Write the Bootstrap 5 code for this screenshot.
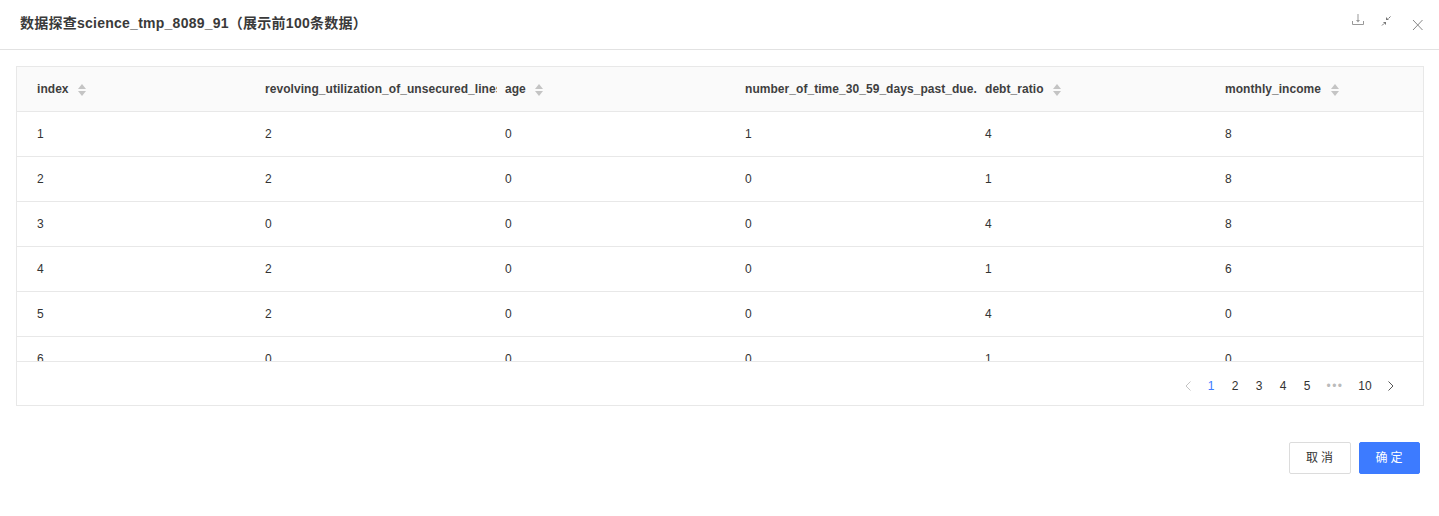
<!DOCTYPE html>
<html lang="en">
<head>
  <meta charset="UTF-8">
  <meta name="viewport" content="width=device-width, initial-scale=1.0">
  <title>数据探查</title>
  <link href="https://cdn.jsdelivr.net/npm/bootstrap@5.3.3/dist/css/bootstrap.min.css" rel="stylesheet">
  <style>
    body {
      font-family: "Liberation Sans", "Noto Sans CJK SC", sans-serif;
      font-size: 12px;
      color: #333;
      background: #fff;
      overflow: hidden;
    }

    .dialog-head {
      height: 50px;
      padding: 0 14px 0 20px;
      border-bottom: 1px solid #e2e2e2;
    }

    .dialog-title {
      font-size: 14px;
      font-weight: 700;
      letter-spacing: .25px;
      color: #3a3a3a;
      margin: 0;
      padding-bottom: 3px;
    }

    .tool-download { margin-top: 13px; }
    .tool-shrink { margin: 14px 18px 0 14px; }
    .tool-close { margin-top: 18px; }

    .data-box {
      margin: 16px 15px 0 16px;
      border: 1px solid #e8e8e8;
    }

    .data-scroll {
      height: 295px;
      overflow: hidden;
      border-bottom: 1px solid #e8e8e8;
    }

    .data-table {
      table-layout: fixed;
      width: 100%;
      margin: 0;
      font-size: 12px;
      color: #333;
    }

    .data-table th, .data-table td {
      height: 45px;
      padding: 0 0 0 8px;
      vertical-align: middle;
      white-space: nowrap;
      overflow: hidden;
      border-bottom: 1px solid #e8e8e8;
      color: #333;
    }

    .data-table th {
      background: #fafafa;
      font-weight: 700;
      letter-spacing: .05px;
      color: #3f3f3f;
      height: 44px;
    }

    .data-table th:first-child, .data-table td:first-child {
      padding-left: 20px;
    }

    .sort-mark {
      display: inline-block;
      vertical-align: middle;
      margin-left: 8.5px;
    }

    .pager-bar {
      height: 43px;
      padding: 4px 24px 0 0;
    }

    .pager-prev {
      margin-right: 1px;
    }

    .pager-next {
      margin-left: 2px;
    }

    .pager-item {
      width: 24px;
      text-align: center;
      color: #333;
    }

    .pager-item.is-current {
      color: #3d7bff;
    }

    .pager-dots {
      width: 28px;
      margin-left: 2px;
      text-align: center;
      color: #bbb;
      font-size: 12px;
      letter-spacing: 1.5px;
      white-space: nowrap;
    }

    .pager-wide {
      width: 32px;
    }

    .dialog-foot {
      padding: 36px 19px 0 0;
    }

    .btn-plain, .btn-ok {
      width: 62px;
      height: 32px;
      font-size: 12px;
      letter-spacing: 3px;
      border-radius: 2px;
      padding: 0 0 0 2px;
    }

    .btn-plain {
      background: #fff;
      border: 1px solid #dcdcdc;
      color: #333;
    }

    .btn-ok {
      width: 61px;
      background: #3d7bff;
      border: 1px solid #3d7bff;
      color: #fff;
    }
  </style>
</head>
<body>
  <div class="dialog-head d-flex justify-content-between">
    <h1 class="dialog-title align-self-center">数据探查science_tmp_8089_91（展示前100条数据）</h1>
    <div class="d-flex align-items-start">
      <svg class="tool-download" width="14" height="14" viewBox="0 0 14 14" fill="none" stroke="#999"><path d="M7 1v6.500M1.500 8v3.500h11V8"/><path d="M5 7h4L7 9.500z" fill="#999" stroke="none"/></svg>
      <svg class="tool-shrink" width="14" height="14" viewBox="0 0 14 14" fill="none" stroke="#777"><path d="M3 11.500 5 9.500M11.500 2.500 9.500 4.500"/><path d="M4 8h3v3zM10 6H7V3z" fill="#777" stroke="none"/></svg>
      <svg class="tool-close" width="14" height="14" viewBox="0 0 14 14" fill="none" stroke="#888"><path d="M2 2 11.500 12M11.500 2 2 12"/></svg>
    </div>
  </div>

  <div class="data-box">
    <div class="data-scroll">
      <table class="data-table" id="dataTable">
        <colgroup>
          <col style="width:240px"><col style="width:240px"><col style="width:240px"><col style="width:240px"><col style="width:240px"><col>
        </colgroup>
        <thead><tr id="headRow"></tr></thead>
        <tbody id="bodyRows"></tbody>
      </table>
    </div>
    <div class="pager-bar d-flex align-items-center justify-content-end">
      <svg class="pager-prev" width="20" height="12" viewBox="0 0 20 12" fill="none" stroke="#c4c4c4"><path d="M12.500 1.500 8 6l4.500 4.500"/></svg>
      <span class="pager-item is-current">1</span>
      <span class="pager-item">2</span>
      <span class="pager-item">3</span>
      <span class="pager-item">4</span>
      <span class="pager-item">5</span>
      <span class="pager-dots">•••</span>
      <span class="pager-item pager-wide">10</span>
      <svg class="pager-next" width="16" height="12" viewBox="0 0 16 12" fill="none" stroke="#555"><path d="M5.500 1.500 10 6l-4.500 4.500"/></svg>
    </div>
  </div>

  <div class="dialog-foot d-flex justify-content-end gap-2">
    <button class="btn btn-plain" type="button">取消</button>
    <button class="btn btn-ok" type="button">确定</button>
  </div>

  <script>
    const columns = [
      ['index', true],
      ['revolving_utilization_of_unsecured_lines', false],
      ['age', true],
      ['number_of_time_30_59_days_past_due.', false],
      ['debt_ratio', true],
      ['monthly_income', true]
    ];
    const rows = [
      [1, 2, 0, 1, 4, 8],
      [2, 2, 0, 0, 1, 8],
      [3, 0, 0, 0, 4, 8],
      [4, 2, 0, 0, 1, 6],
      [5, 2, 0, 0, 4, 0],
      [6, 0, 0, 0, 1, 0]
    ];
    const sortIcon = '<svg class="sort-mark" width="10" height="14" viewBox="0 0 10 14" fill="#c4c4c4"><path d="M5 1 9 6H1zM1 8h8l-4 5z"/></svg>';

    document.getElementById('headRow').innerHTML = columns
      .map(c => `<th>${c[0]}${c[1] ? sortIcon : ''}</th>`).join('');
    document.getElementById('bodyRows').innerHTML = rows
      .map(r => '<tr>' + r.map(v => `<td>${v}</td>`).join('') + '</tr>').join('');
  </script>
  <script src="https://cdn.jsdelivr.net/npm/bootstrap@5.3.3/dist/js/bootstrap.bundle.min.js"></script>
</body>
</html>
